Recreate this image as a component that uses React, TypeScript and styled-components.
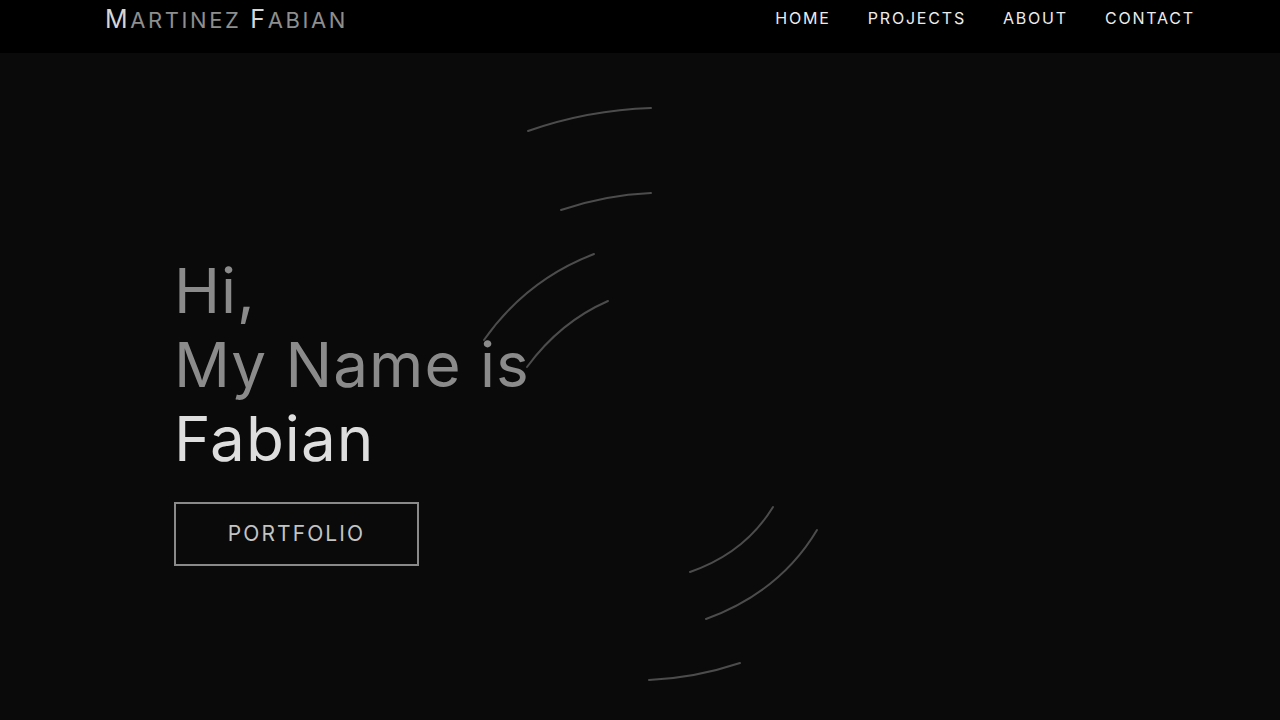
import React from "react";
import styled, { createGlobalStyle } from "styled-components";

const GlobalStyle = createGlobalStyle`
  html, body {
    margin: 0;
    padding: 0;
    background: #0a0a0a;
    font-family: "Inter", "Open Sans", sans-serif;
  }
`;

const NAV_ITEMS = ["HOME", "PROJECTS", "ABOUT", "CONTACT"];

const ARCS = [
  "M528 131 Q588 110 651 108",
  "M561 210 Q605 195 651 193",
  "M484 340 Q526 280 594 254",
  "M527 367 Q560 322 608 301",
  "M690 572 Q745 553 773 507",
  "M706 619 Q780 592 817 530",
  "M649 680 Q695 678 740 663",
];

export default function App() {
  return (
    <Page>
      <GlobalStyle />
      <Header>
        <Logo>
          <Initial>M</Initial>ARTINEZ <Initial>F</Initial>ABIAN
        </Logo>
        <Nav>
          {NAV_ITEMS.map((item) => (
            <NavLink key={item}>{item}</NavLink>
          ))}
        </Nav>
      </Header>
      <Hero>
        <Arcs viewBox="0 53 1280 667" preserveAspectRatio="none">
          {ARCS.map((d, i) => (
            <path key={i} d={d} />
          ))}
        </Arcs>
        <Intro>
          <Heading>
            <Line muted>Hi,</Line>
            <Line muted>My Name is</Line>
            <Line>Fabian</Line>
          </Heading>
          <PortfolioButton>PORTFOLIO</PortfolioButton>
        </Intro>
      </Hero>
    </Page>
  );
}

const Page = styled.div`
  width: 1280px;
  height: 720px;
  overflow: hidden;
  display: flex;
  flex-direction: column;
  background: #0a0a0a;
`;

const Header = styled.header`
  height: 53px;
  flex-shrink: 0;
  background: #000;
  display: flex;
  align-items: center;
  justify-content: space-between;
  padding: 0 85px 0 105px;
  box-sizing: border-box;
`;

const Logo = styled.div`
  font-size: 22px;
  color: #8e8e8e;
  letter-spacing: 2.6px;
  margin-top: -16px;
  font-weight: 400;
`;

const Initial = styled.span`
  font-size: 25px;
  color: #d6d6d6;
`;

const Nav = styled.nav`
  display: flex;
  gap: 37px;
  margin-top: -17px;
`;

const NavLink = styled.a`
  font-size: 16px;
  color: #ececec;
  letter-spacing: 1.8px;
  cursor: pointer;
`;

const Hero = styled.main`
  position: relative;
  flex: 1;
`;

const Arcs = styled.svg`
  position: absolute;
  inset: 0;
  width: 100%;
  height: 100%;
  fill: none;
  stroke: #4c4c4c;
  stroke-width: 2;
  stroke-linecap: round;
`;

const Intro = styled.div`
  position: relative;
  padding: 201px 0 0 174px;
  display: flex;
  flex-direction: column;
  align-items: flex-start;
`;

const Heading = styled.h1`
  margin: 0;
  font-size: 62px;
  line-height: 74px;
  font-weight: 400;
  letter-spacing: 1px;
`;

const Line = styled.div<{ muted?: boolean }>`
  color: ${({ muted }) => (muted ? "#8b8b8b" : "#dedede")};
`;

const PortfolioButton = styled.button`
  margin-top: 26px;
  width: 245px;
  height: 64px;
  background: transparent;
  border: 2px solid #8a8a8a;
  color: #c4c4c4;
  font-family: inherit;
  font-size: 21px;
  letter-spacing: 2.1px;
  padding-top: 0;
  padding-bottom: 2px;
  cursor: pointer;
`;
